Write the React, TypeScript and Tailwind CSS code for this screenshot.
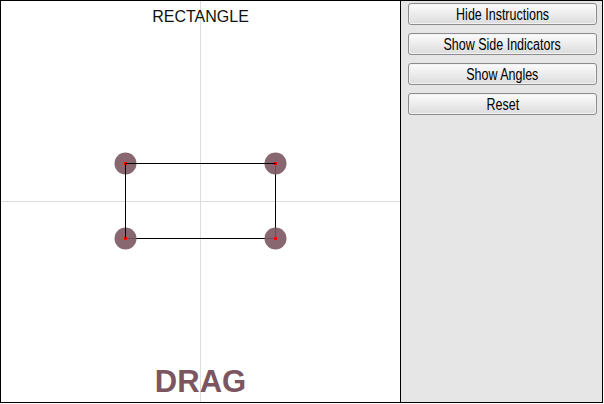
import { useState } from 'react';

const corners = [
  { x: 125, y: 163 },
  { x: 275, y: 163 },
  { x: 275, y: 238 },
  { x: 125, y: 238 },
];

function ControlButton({ label }: { label: string }) {
  return (
    <button
      type="button"
      className="flex h-[22px] w-full items-center justify-center rounded-[3px] border border-[#8c8c8c] bg-gradient-to-b from-[#fcfcfc] to-[#dcdcdc] text-[16px] leading-none text-black shadow-[inset_0_0_0_1px_#f2f2f2]"
    >
      <span className="inline-block translate-y-px scale-x-[0.78] whitespace-nowrap">{label}</span>
    </button>
  );
}

export default function App() {
  const [showInstructions] = useState(true);

  return (
    <div
      className="flex h-[403px] w-[603px] border border-black bg-white"
      style={{ fontFamily: '"Liberation Sans", Arial, sans-serif' }}
    >
      <div className="relative h-full w-[400px] overflow-hidden border-r border-black">
        <svg className="absolute inset-0" width={400} height={401}>
          <line x1={199.5} y1={0} x2={199.5} y2={401} stroke="#dddddd" strokeWidth={1} />
          <line x1={0} y1={200.5} x2={400} y2={200.5} stroke="#dddddd" strokeWidth={1} />
          <polygon
            points={corners.map((c) => `${c.x - 0.5},${c.y - 0.5}`).join(' ')}
            fill="none"
            stroke="#000"
            strokeWidth={1}
          />
          {corners.map((c, i) => (
            <g key={i}>
              <circle cx={c.x - 0.5} cy={c.y - 0.5} r={11} fill="#7b5660" fillOpacity={0.9} />
              <rect x={c.x - 2} y={c.y - 2} width={3} height={3} fill="#ff0000" />
            </g>
          ))}
          <line x1={124.5} y1={162.5} x2={274.5} y2={162.5} stroke="#000" />
          <line x1={124.5} y1={162.5} x2={124.5} y2={237.5} stroke="#000" />
        </svg>
        <div className="absolute left-0 right-0 top-[6px] text-center text-[16px] leading-[19px] text-[#111]">
          RECTANGLE
        </div>
        {showInstructions && (
          <div className="absolute bottom-[2px] left-0 right-0 text-center text-[31px] font-bold leading-[36px] text-[#7b5660]">
            DRAG
          </div>
        )}
      </div>
      <div className="flex flex-1 flex-col gap-[8px] bg-[#e6e6e6] pl-[7px] pr-[5px] pt-[2px]">
        <ControlButton label="Hide Instructions" />
        <ControlButton label="Show Side Indicators" />
        <ControlButton label="Show Angles" />
        <ControlButton label="Reset" />
      </div>
    </div>
  );
}
